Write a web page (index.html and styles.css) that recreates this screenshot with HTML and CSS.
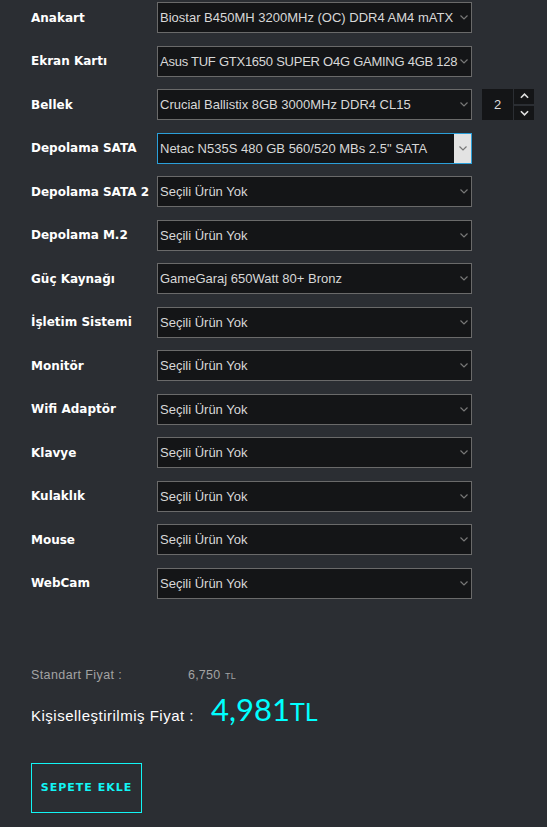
FILE: index.html
```html
<!DOCTYPE html>
<html lang="tr">
<head>
<meta charset="utf-8">
<title>Sistem Toplama</title>
<link rel="stylesheet" href="styles.css">
</head>
<body>
<div class="page">
  <div class="rows">
    <div class="row">
      <div class="label">Anakart</div>
      <div class="select"><span class="value">Biostar B450MH 3200MHz (OC) DDR4 AM4 mATX</span><span class="arrow"><svg viewBox="0 0 8 5" class="chev"><path d="M0.5 0.5 L4 4 L7.5 0.5"/></svg></span></div>
    </div>
    <div class="row">
      <div class="label">Ekran Kartı</div>
      <div class="select"><span class="value tight">Asus TUF GTX1650 SUPER O4G GAMING 4GB 128</span><span class="arrow"><svg viewBox="0 0 8 5" class="chev"><path d="M0.5 0.5 L4 4 L7.5 0.5"/></svg></span></div>
    </div>
    <div class="row">
      <div class="label">Bellek</div>
      <div class="select"><span class="value">Crucial Ballistix 8GB 3000MHz DDR4 CL15</span><span class="arrow"><svg viewBox="0 0 8 5" class="chev"><path d="M0.5 0.5 L4 4 L7.5 0.5"/></svg></span></div>
      <div class="qty">
        <div class="qty-num">2</div>
        <div class="qty-btns">
          <div class="qty-btn"><svg viewBox="0 0 10 6" class="qchev"><path d="M1 5 L5 1 L9 5"/></svg></div>
          <div class="qty-btn"><svg viewBox="0 0 10 6" class="qchev"><path d="M1 1 L5 5 L9 1"/></svg></div>
        </div>
      </div>
    </div>
    <div class="row">
      <div class="label">Depolama SATA</div>
      <div class="select focused"><span class="value">Netac N535S 480 GB 560/520 MBs 2.5" SATA</span><span class="arrow"><svg viewBox="0 0 8 5" class="chev"><path d="M0.5 0.5 L4 4 L7.5 0.5"/></svg></span></div>
    </div>
    <div class="row">
      <div class="label">Depolama SATA 2</div>
      <div class="select"><span class="value">Seçili Ürün Yok</span><span class="arrow"><svg viewBox="0 0 8 5" class="chev"><path d="M0.5 0.5 L4 4 L7.5 0.5"/></svg></span></div>
    </div>
    <div class="row">
      <div class="label">Depolama M.2</div>
      <div class="select"><span class="value">Seçili Ürün Yok</span><span class="arrow"><svg viewBox="0 0 8 5" class="chev"><path d="M0.5 0.5 L4 4 L7.5 0.5"/></svg></span></div>
    </div>
    <div class="row">
      <div class="label">Güç Kaynağı</div>
      <div class="select"><span class="value">GameGaraj 650Watt 80+ Bronz</span><span class="arrow"><svg viewBox="0 0 8 5" class="chev"><path d="M0.5 0.5 L4 4 L7.5 0.5"/></svg></span></div>
    </div>
    <div class="row">
      <div class="label">İşletim Sistemi</div>
      <div class="select"><span class="value">Seçili Ürün Yok</span><span class="arrow"><svg viewBox="0 0 8 5" class="chev"><path d="M0.5 0.5 L4 4 L7.5 0.5"/></svg></span></div>
    </div>
    <div class="row">
      <div class="label">Monitör</div>
      <div class="select"><span class="value">Seçili Ürün Yok</span><span class="arrow"><svg viewBox="0 0 8 5" class="chev"><path d="M0.5 0.5 L4 4 L7.5 0.5"/></svg></span></div>
    </div>
    <div class="row">
      <div class="label">Wifi Adaptör</div>
      <div class="select"><span class="value">Seçili Ürün Yok</span><span class="arrow"><svg viewBox="0 0 8 5" class="chev"><path d="M0.5 0.5 L4 4 L7.5 0.5"/></svg></span></div>
    </div>
    <div class="row">
      <div class="label">Klavye</div>
      <div class="select"><span class="value">Seçili Ürün Yok</span><span class="arrow"><svg viewBox="0 0 8 5" class="chev"><path d="M0.5 0.5 L4 4 L7.5 0.5"/></svg></span></div>
    </div>
    <div class="row">
      <div class="label">Kulaklık</div>
      <div class="select"><span class="value">Seçili Ürün Yok</span><span class="arrow"><svg viewBox="0 0 8 5" class="chev"><path d="M0.5 0.5 L4 4 L7.5 0.5"/></svg></span></div>
    </div>
    <div class="row">
      <div class="label">Mouse</div>
      <div class="select"><span class="value">Seçili Ürün Yok</span><span class="arrow"><svg viewBox="0 0 8 5" class="chev"><path d="M0.5 0.5 L4 4 L7.5 0.5"/></svg></span></div>
    </div>
    <div class="row">
      <div class="label">WebCam</div>
      <div class="select"><span class="value">Seçili Ürün Yok</span><span class="arrow"><svg viewBox="0 0 8 5" class="chev"><path d="M0.5 0.5 L4 4 L7.5 0.5"/></svg></span></div>
    </div>
  </div>

  <div class="prices">
    <div class="price-std">
      <span class="std-label">Standart Fiyat :</span>
      <span class="std-value">6,750 <small class="cur">TL</small></span>
    </div>
    <div class="price-custom">
      <span class="custom-label">Kişiselleştirilmiş Fiyat :</span>
      <span class="custom-value">4,981<span class="custom-cur">TL</span></span>
    </div>
  </div>

  <button class="cart-btn">SEPETE EKLE</button>
</div>
</body>
</html>
```

FILE: styles.css
```css
html, body {
  margin: 0;
  background: #2b2e33;
}
body {
  font-family: "Liberation Sans", Arial, sans-serif;
  color: #fff;
}
.page {
  padding: 2px 0 40px 31px;
}
.rows {
  display: flex;
  flex-direction: column;
  gap: 12.5px;
}
.row {
  display: flex;
  align-items: center;
  height: 31px;
}
.label {
  width: 126px;
  flex: none;
  font-family: "DejaVu Sans", sans-serif;
  font-weight: bold;
  font-size: 12px;
  color: #fff;
  white-space: nowrap;
}
.select {
  width: 315px;
  height: 31px;
  box-sizing: border-box;
  border: 1px solid #6a6a6a;
  background: #141517;
  display: flex;
  align-items: stretch;
  color: #d8d8d8;
  font-size: 13px;
}
.select.focused {
  border-color: #2b9fd9;
}
.value {
  flex: 1;
  min-width: 0;
  padding-left: 2px;
  white-space: nowrap;
  display: flex;
  align-items: center;
}
.value.tight {
  letter-spacing: -0.25px;
}
.arrow {
  width: 15px;
  flex: none;
  display: flex;
  align-items: center;
  justify-content: center;
}
.focused .arrow {
  width: 17px;
  background: #e3e3e3;
}
.chev {
  width: 8px;
  height: 5px;
  fill: none;
  stroke: #777;
  stroke-width: 1.2;
}
.qty {
  display: flex;
  margin-left: 10px;
  gap: 1px;
  height: 31px;
}
.qty-num {
  width: 31px;
  background: #141517;
  color: #dcdcdc;
  font-size: 13px;
  display: flex;
  align-items: center;
  justify-content: center;
}
.qty-btns {
  display: flex;
  flex-direction: column;
  gap: 2px;
  width: 20px;
}
.qty-btn {
  flex: 1;
  background: #141517;
  display: flex;
  align-items: center;
  justify-content: center;
}
.qchev {
  width: 9px;
  height: 6px;
  fill: none;
  stroke: #e0e0e0;
  stroke-width: 1.8;
}
.prices {
  margin-top: 69px;
}
.price-std {
  display: flex;
  align-items: baseline;
  color: #a3a3a3;
  font-size: 12.5px;
  letter-spacing: 0.4px;
}
.std-label {
  width: 157px;
}
.std-value {
  letter-spacing: 0.2px;
}
.cur {
  font-size: 9px;
  margin-left: 1px;
}
.price-custom {
  display: flex;
  align-items: baseline;
  margin-top: 9px;
}
.custom-label {
  font-size: 15px;
  letter-spacing: 0.5px;
  color: #fff;
  width: 180px;
}
.custom-value {
  font-family: "Lato", "Liberation Sans", sans-serif;
  font-weight: 400;
  font-size: 31px;
  line-height: 36px;
  color: #00ffff;
}
.custom-cur {
  font-size: 25px;
}
.cart-btn {
  display: block;
  margin-top: 34px;
  width: 111px;
  height: 50px;
  box-sizing: border-box;
  background: transparent;
  border: 1px solid #12f5f5;
  color: #12f5f5;
  font-family: "DejaVu Sans", sans-serif;
  font-weight: bold;
  font-size: 11px;
  letter-spacing: 1px;
  padding: 0;
  cursor: pointer;
}
```
